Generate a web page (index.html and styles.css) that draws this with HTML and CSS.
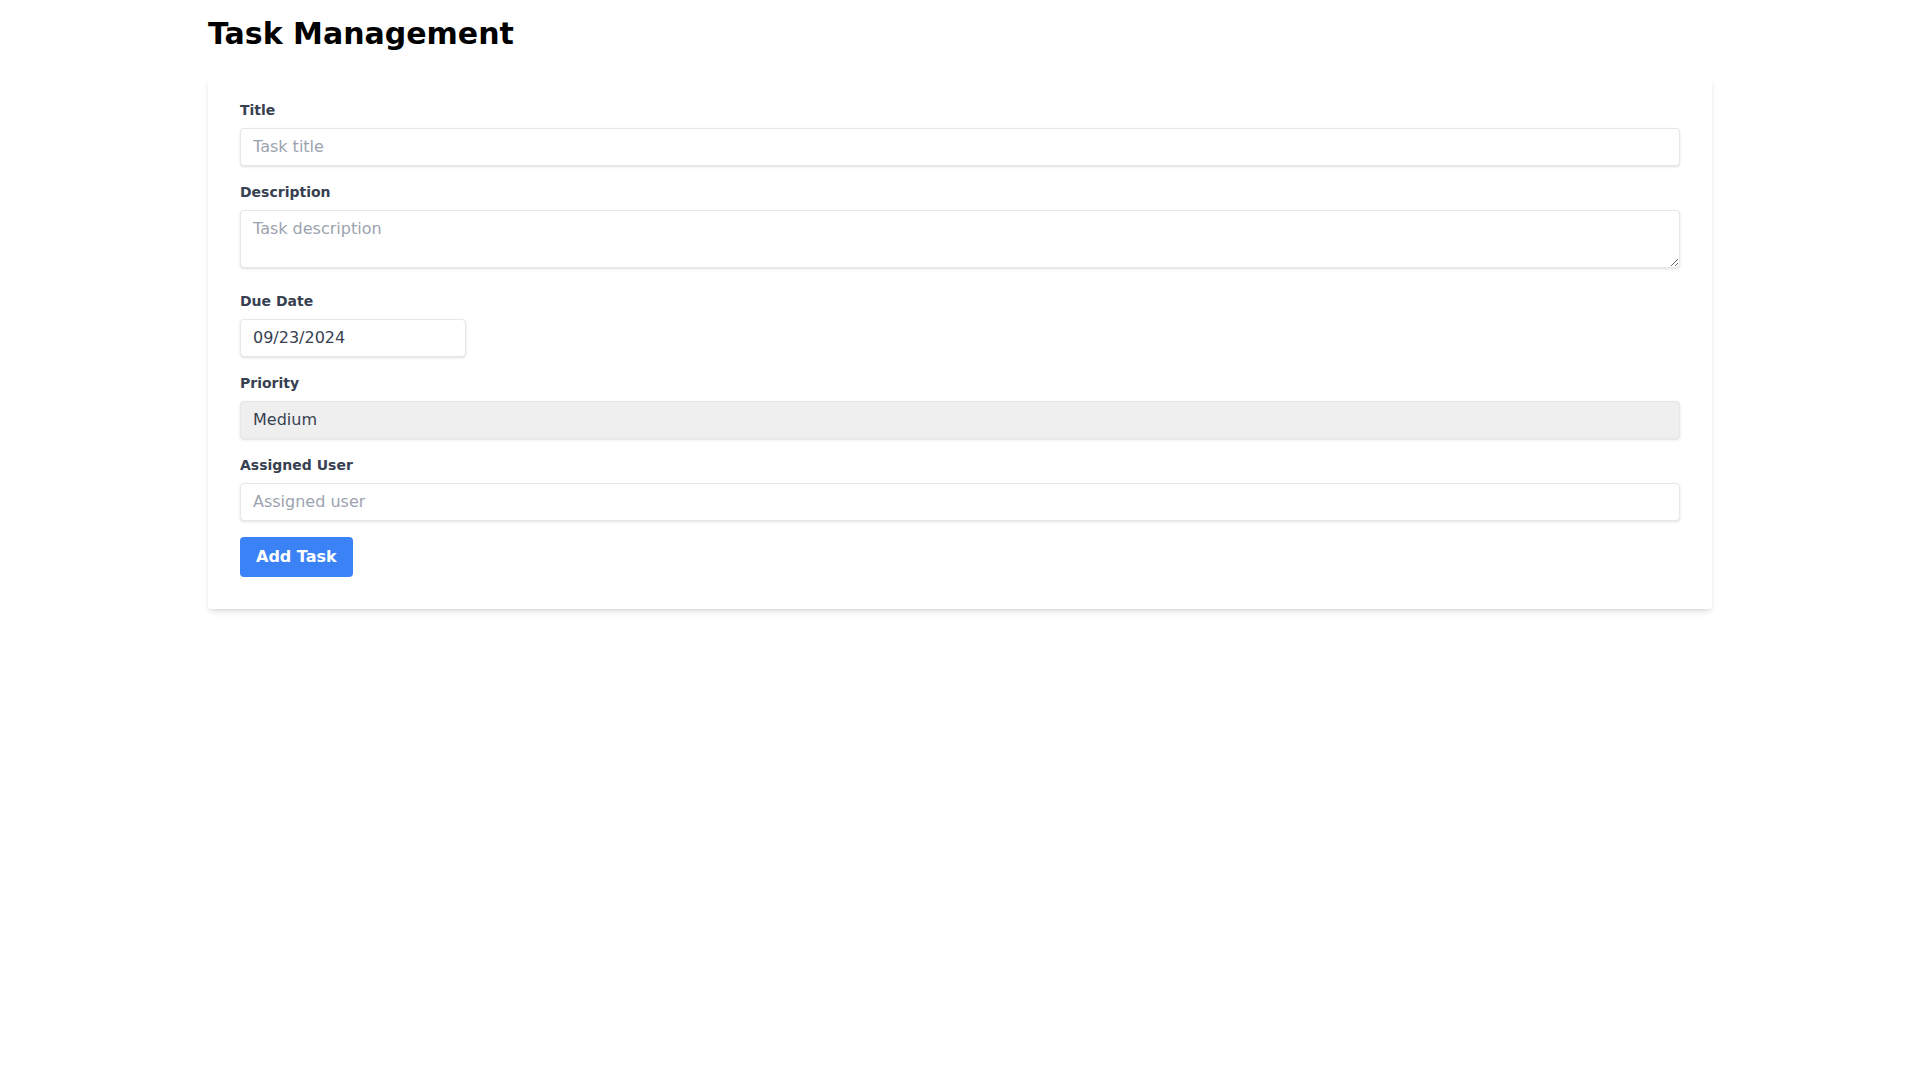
FILE: index.html
```html
<!DOCTYPE html>
<html lang="en">
<head>
<meta charset="utf-8">
<title>Task Management</title>
<link rel="stylesheet" href="styles.css">
</head>
<body>
<div class="container">
  <h1 class="page-title">Task Management</h1>
  <form class="card">
    <div class="field">
      <label class="label" for="title">Title</label>
      <input class="control" id="title" type="text" placeholder="Task title">
    </div>
    <div class="field">
      <label class="label" for="desc">Description</label>
      <textarea class="control textarea" id="desc" rows="2" placeholder="Task description"></textarea>
    </div>
    <div class="field">
      <label class="label" for="due">Due Date</label>
      <div class="date-wrap"><input class="control date" id="due" type="text" value="09/23/2024"></div>
    </div>
    <div class="field">
      <label class="label" for="prio">Priority</label>
      <select class="control select" id="prio">
        <option>Low</option>
        <option selected>Medium</option>
        <option>High</option>
      </select>
    </div>
    <div class="field">
      <label class="label" for="user">Assigned User</label>
      <input class="control" id="user" type="text" placeholder="Assigned user">
    </div>
    <div class="actions">
      <button class="btn" type="button">Add Task</button>
    </div>
  </form>
</div>
</body>
</html>
```
FILE: styles.css
```css
*, *::before, *::after { box-sizing: border-box; }
html, body { margin: 0; padding: 0; }
body {
  font-family: "DejaVu Sans", sans-serif;
  line-height: 1.5;
  background: #ffffff;
  color: #000;
}
.container {
  max-width: 1536px;
  margin: 0 auto;
  padding: 0 16px;
}
.page-title {
  margin: 16px 0 24px;
  font-size: 30px;
  line-height: 36px;
  font-weight: 700;
  color: #000;
}
.card {
  background: #fff;
  border-radius: 4px;
  box-shadow: 0 4px 6px -1px rgba(0,0,0,.1), 0 2px 4px -2px rgba(0,0,0,.1);
  padding: 24px 32px 32px;
  margin-bottom: 16px;
}
.field { margin-bottom: 16px; }
.label {
  display: block;
  font-size: 14px;
  line-height: 20px;
  font-weight: 700;
  color: #374151;
  margin-bottom: 8px;
}
.control {
  display: block;
  width: 100%;
  font-family: "DejaVu Sans", sans-serif;
  font-size: 16px;
  line-height: 20px;
  padding: 8px 12px;
  border: 1px solid #e5e7eb;
  border-radius: 4px;
  background: #fff;
  color: #374151;
  box-shadow: 0 1px 3px 0 rgba(0,0,0,.1), 0 1px 2px -1px rgba(0,0,0,.1);
  outline: none;
  margin: 0;
  -webkit-appearance: none;
  appearance: none;
}
.control::placeholder { color: #9ca3af; opacity: 1; }
.textarea {
  display: inline-block;
  vertical-align: baseline;
  height: 58px;
  resize: vertical;
}
.date-wrap { display: inline-block; vertical-align: baseline; }
.date { width: 226px; }
.select { background: #efefef; height: 38px; }
.actions { display: flex; }
.btn {
  font-family: "DejaVu Sans", sans-serif;
  font-size: 16px;
  line-height: 24px;
  font-weight: 700;
  color: #fff;
  background: #3b82f6;
  border: none;
  border-radius: 4px;
  padding: 8px 16px;
  cursor: pointer;
}
```
